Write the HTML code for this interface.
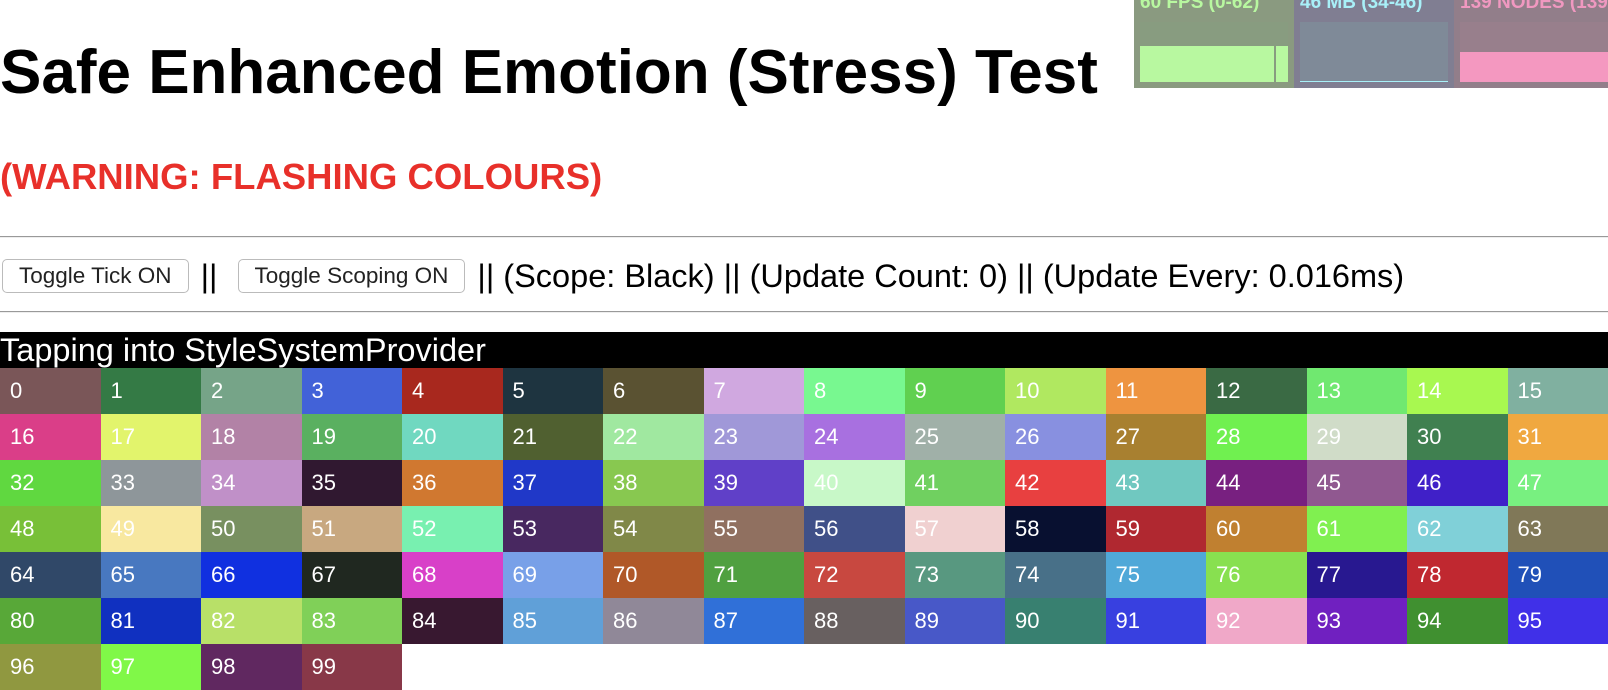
<!DOCTYPE html>
<html><head><meta charset="utf-8"><style>
body{margin:0;font-family:"Liberation Sans",sans-serif;background:#fff;width:1608px;height:690px;overflow:hidden;position:relative}
h1{position:absolute;left:0;top:37px;margin:0;font-size:62px;font-weight:bold;color:#000;white-space:nowrap}
h2{position:absolute;left:0;top:156px;margin:0;font-size:36.5px;font-weight:bold;color:#e8302a;white-space:nowrap}
.hr{position:absolute;left:0;width:1608px;height:1px;background:#999;border-bottom:1px solid #eee}
.ctrl{position:absolute;left:0;top:258px;height:36px;font-size:32.5px;white-space:nowrap;color:#000;display:flex;align-items:center}
button{font-family:"Liberation Sans",sans-serif;font-size:22.5px;height:34px;padding:0 16px;background:#fff;border:1px solid #bbb;border-radius:5px;margin:0 12px 0 2px;color:#222}
.bar{position:absolute;left:0;top:332px;width:1608px;height:36px;background:#000;color:#fff;font-size:32.5px;line-height:36px;overflow:hidden}
.grid{position:absolute;left:0;top:368px;width:1608px;display:flex;flex-wrap:wrap}
.grid div{width:6.25%;height:46px;color:#fff;font-size:22px;line-height:46px;padding-left:10px;box-sizing:border-box}
.stats{position:absolute;top:0;left:1134px;height:88px;width:474px;display:flex;overflow:hidden}
.p{width:160px;height:88px;position:relative;font-size:19px;font-weight:bold;white-space:nowrap}
.p span{position:absolute;left:6px;top:-8px}
.g{position:absolute;left:6px;top:22px;width:148px;height:60px}
</style></head><body>
<h1>Safe Enhanced Emotion (Stress) Test</h1>
<h2>(WARNING: FLASHING COLOURS)</h2>
<div class="hr" style="top:236px"></div>
<div class="ctrl"><button>Toggle Tick ON</button>||&nbsp;&nbsp;<button>Toggle Scoping ON</button>|| (Scope: Black) || (Update Count: 0) || (Update Every: 0.016ms)</div>
<div class="hr" style="top:311px"></div>
<div class="bar">Tapping into StyleSystemProvider</div>
<div class="stats">
<div class="p" style="background:#8a9a80;color:#b8f8a0"><span>60 FPS (0-62)</span><div class="g" style="background:#889c80"><div style="position:absolute;left:0;right:0;bottom:0;height:36px;background:#b8f8a0"></div><div style="position:absolute;left:134px;width:2px;bottom:0;height:36px;background:#889c80"></div></div></div>
<div class="p" style="background:#807e92;color:#a8f0f8"><span>46 MB (34-46)</span><div class="g" style="background:#7f8a98;border-bottom:1px solid #a8f0f8;height:59px"></div></div>
<div class="p" style="background:#927e8a;color:#f098c0;width:154px"><span>139 NODES (139-139)</span><div class="g" style="background:#987f8c;width:148px"><div style="position:absolute;left:0;right:0;bottom:0;height:30px;background:#f498c0"></div></div></div>
</div>
<div class="grid">
<div style="background:#7a5658">0</div><div style="background:#347a45">1</div><div style="background:#76a488">2</div><div style="background:#4262d8">3</div><div style="background:#a8281e">4</div><div style="background:#1e3440">5</div><div style="background:#5a5232">6</div><div style="background:#d0a8e0">7</div><div style="background:#78f890">8</div><div style="background:#60d050">9</div><div style="background:#b0e860">10</div><div style="background:#ee9440">11</div><div style="background:#3a6a44">12</div><div style="background:#70e870">13</div><div style="background:#a8f850">14</div><div style="background:#80b0a0">15</div>
<div style="background:#da3e88">16</div><div style="background:#e2f46c">17</div><div style="background:#b282a6">18</div><div style="background:#5ab060">19</div><div style="background:#70d8c0">20</div><div style="background:#506030">21</div><div style="background:#a0e8a0">22</div><div style="background:#a098d8">23</div><div style="background:#a870e0">24</div><div style="background:#a0b0a8">25</div><div style="background:#8890e0">26</div><div style="background:#a88030">27</div><div style="background:#70f050">28</div><div style="background:#d0dcc8">29</div><div style="background:#408050">30</div><div style="background:#f0a840">31</div>
<div style="background:#60d840">32</div><div style="background:#8e969a">33</div><div style="background:#c090c8">34</div><div style="background:#301830">35</div><div style="background:#d07830">36</div><div style="background:#2038c8">37</div><div style="background:#88c850">38</div><div style="background:#6040c8">39</div><div style="background:#c8f8c8">40</div><div style="background:#70d060">41</div><div style="background:#e84040">42</div><div style="background:#70c8c0">43</div><div style="background:#782080">44</div><div style="background:#905890">45</div><div style="background:#4020c8">46</div><div style="background:#78f080">47</div>
<div style="background:#78c038">48</div><div style="background:#f8e8a0">49</div><div style="background:#789060">50</div><div style="background:#c8a880">51</div><div style="background:#78f0b0">52</div><div style="background:#482860">53</div><div style="background:#808848">54</div><div style="background:#907060">55</div><div style="background:#405088">56</div><div style="background:#f0d0d0">57</div><div style="background:#081030">58</div><div style="background:#b02830">59</div><div style="background:#c08030">60</div><div style="background:#80f050">61</div><div style="background:#80d0d8">62</div><div style="background:#807858">63</div>
<div style="background:#304868">64</div><div style="background:#4878c0">65</div><div style="background:#1030e0">66</div><div style="background:#202820">67</div><div style="background:#d840c8">68</div><div style="background:#78a0e8">69</div><div style="background:#b05828">70</div><div style="background:#50a040">71</div><div style="background:#c84840">72</div><div style="background:#589880">73</div><div style="background:#487088">74</div><div style="background:#50a8d8">75</div><div style="background:#88e050">76</div><div style="background:#281890">77</div><div style="background:#c02830">78</div><div style="background:#2050b8">79</div>
<div style="background:#58a838">80</div><div style="background:#1030c0">81</div><div style="background:#b8e068">82</div><div style="background:#80d058">83</div><div style="background:#381830">84</div><div style="background:#60a0d8">85</div><div style="background:#908898">86</div><div style="background:#3070d8">87</div><div style="background:#686060">88</div><div style="background:#4858c8">89</div><div style="background:#388070">90</div><div style="background:#3840e0">91</div><div style="background:#f0a8c8">92</div><div style="background:#7020c0">93</div><div style="background:#409030">94</div><div style="background:#4030e8">95</div>
<div style="background:#909840">96</div><div style="background:#80f848">97</div><div style="background:#602860">98</div><div style="background:#883848">99</div>
</div>
</body></html>
